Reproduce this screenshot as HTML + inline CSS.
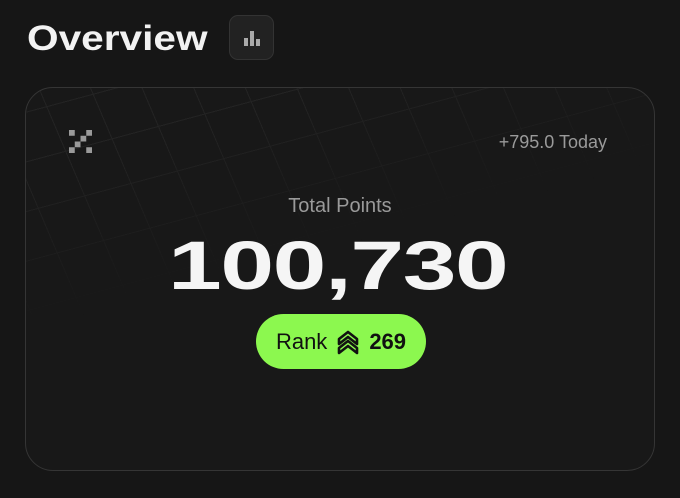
<!DOCTYPE html>
<html><head><style>
body{margin:0;width:680px;height:498px;background:#161616;overflow:hidden;font-family:"Liberation Sans",sans-serif;position:relative}
.t{position:absolute;left:27px;top:19px;font-size:35px;font-weight:bold;color:#f2f2f2;transform:scaleX(1.16);transform-origin:left}
.ib{position:absolute;left:229px;top:15px;width:45px;height:45px;border:1px solid #333;border-radius:9px;background:#222;box-sizing:border-box}
.card{position:absolute;left:25px;top:87px;width:630px;height:384px;border:1.5px solid #353535;border-radius:28px;box-sizing:border-box;overflow:hidden;background:#181818}
.grid{position:absolute;left:-100px;top:-230px;width:900px;height:500px;transform:rotate(-15deg) skewX(8deg);
background-image:repeating-linear-gradient(90deg,#232323 0 1px,transparent 1px 48px),repeating-linear-gradient(0deg,#232323 0 1px,transparent 1px 48px);
-webkit-mask-image:linear-gradient(180deg,#000 45%,transparent 75%);mask-image:linear-gradient(180deg,#000 45%,transparent 75%)}
.today{position:absolute;right:47px;top:44px;font-size:18px;color:#9a9a9a}
.tp{position:absolute;left:0;right:0;top:107px;text-align:center;font-size:20px;color:#9a9a9a}
.big{position:absolute;left:142px;top:138px;font-size:69px;font-weight:900;color:#f5f5f5;transform:scaleX(1.40);transform-origin:left;letter-spacing:-1px}
.rank{position:absolute;left:230px;top:226px;width:170px;height:55px;border-radius:28px;background:#8cf84f;display:flex;align-items:center;justify-content:center;font-size:22px;color:#111}
</style></head><body>
<div class="t">Overview</div>
<div class="ib"><svg width="45" height="45" viewBox="0 0 45 45"><rect x="14" y="22" width="4" height="8" fill="#aaa"/><rect x="20" y="15" width="4" height="15" fill="#aaa"/><rect x="26" y="23" width="4" height="7" fill="#aaa"/></svg></div>
<div class="card">
<div class="grid"></div>
<svg style="position:absolute;left:43px;top:42px" width="23" height="23" viewBox="0 0 6 6"><g fill="#9a9a9a"><rect x="0" y="0" width="1.5" height="1.5"/><rect x="4.5" y="0" width="1.5" height="1.5"/><rect x="3" y="1.5" width="1.5" height="1.5"/><rect x="1.5" y="3" width="1.5" height="1.5"/><rect x="0" y="4.5" width="1.5" height="1.5"/><rect x="4.5" y="4.5" width="1.5" height="1.5"/></g></svg>
<div class="today">+795.0 Today</div>
<div class="tp">Total Points</div>
<div class="big">100,730</div>
<div class="rank"><span>Rank</span><svg style="margin:0 10px" width="22" height="26" viewBox="0 0 22 26" fill="none" stroke="#111" stroke-width="2.6" stroke-linejoin="round"><path d="M2 10 L11 3 L20 10 V15 L11 8 L2 15 Z"/><path d="M2 19 L11 12 L20 19 V24 L11 17 L2 24 Z"/></svg><b>269</b></div>
</div>
</body></html>
